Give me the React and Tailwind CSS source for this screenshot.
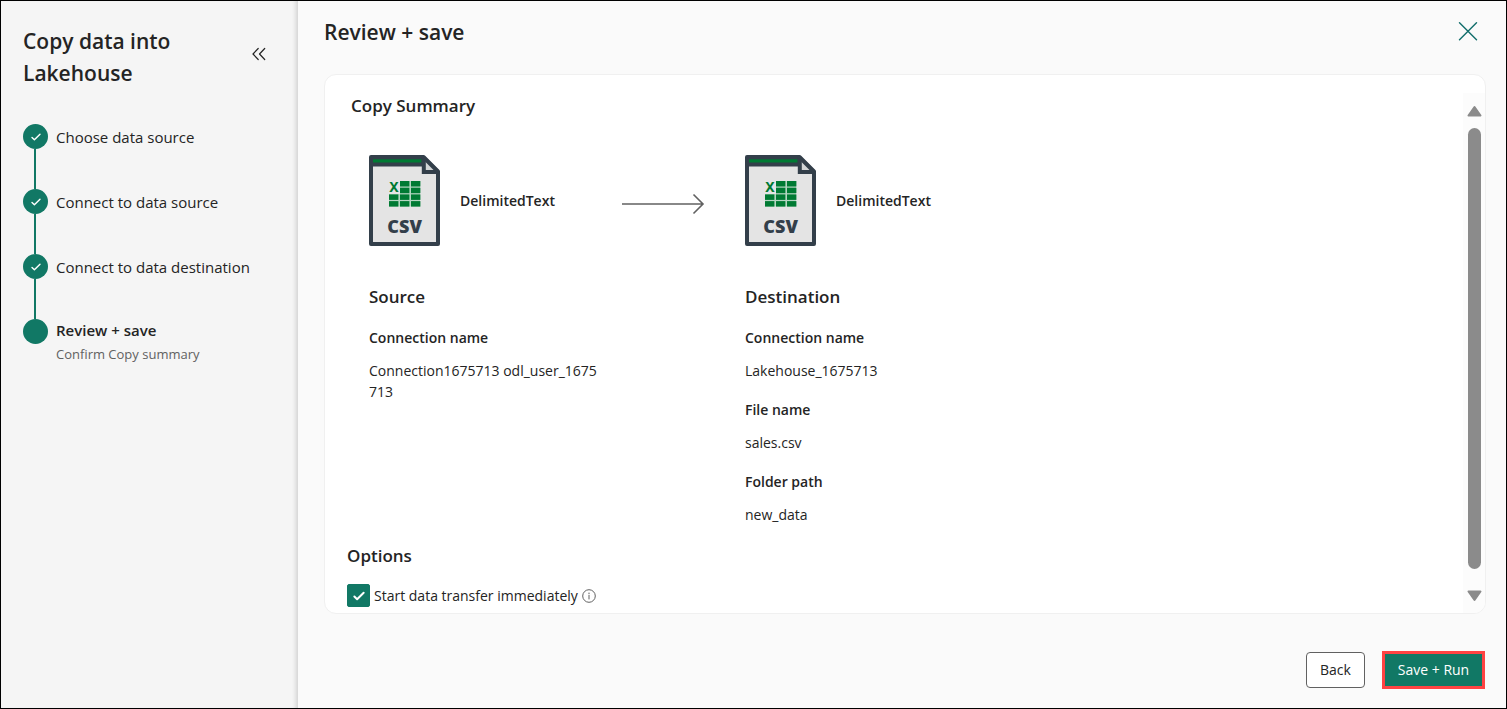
import React from "react";

const steps = [
  { label: "Choose data source", done: true },
  { label: "Connect to data source", done: true },
  { label: "Connect to data destination", done: true },
  { label: "Review + save", note: "Confirm Copy summary", done: false },
];

const source = [["Connection name", "Connection1675713 odl_user_1675713"]];

const destination = [
  ["Connection name", "Lakehouse_1675713"],
  ["File name", "sales.csv"],
  ["Folder path", "new_data"],
];

function Check({ className, width = 1.4 }) {
  return (
    <svg viewBox="0 0 12 12" className={className} fill="none" stroke="currentColor" strokeWidth={width} strokeLinecap="round" strokeLinejoin="round" aria-hidden="true">
      <path d="M2 6.4 4.4 8.8 10 3.2" />
    </svg>
  );
}

function CsvIcon() {
  const cells = [
    [31, 26], [42, 26],
    [31, 32.7], [42, 32.7],
    [20, 39.4], [31, 39.4], [42, 39.4],
    [20, 46.1], [31, 46.1], [42, 46.1],
  ];
  return (
    <svg viewBox="0 0 71 91" className="h-[91px] w-[71px] shrink-0" aria-hidden="true">
      <path d="M2 2H54.5L69 16.5V89H2Z" fill="#e4e4e4" stroke="#333f4a" strokeWidth="4" strokeLinejoin="round" />
      <path d="M2 2H54V11.5H2Z" fill="#333f4a" />
      <path d="M4 4.3H52.5V7.5H4Z" fill="#007a33" />
      <path d="M54.8 3V17H68.5" fill="#d3d5d6" stroke="#333f4a" strokeWidth="4" />
      <path d="M54.5 2.5 69 17" stroke="#333f4a" strokeWidth="3.6" strokeLinecap="round" />
      <path d="M20 39H31V26H51V51.5H20Z" fill="#b5d6c2" />
      {cells.map(([x, y]) => (
        <rect key={`${x}-${y}`} x={x} y={y} width="9.4" height="5.5" fill="#007a33" />
      ))}
      <text x="24.9" y="37.2" textAnchor="middle" fill="#007a33" className="font-['Noto_Sans',sans-serif] text-[14px] font-bold">X</text>
      <text x="35.6" y="77.6" textAnchor="middle" fill="#333f4a" className="font-['Open_Sans',sans-serif] text-[18px] font-extrabold">CSV</text>
    </svg>
  );
}

function Details({ title, items }) {
  return (
    <section className="w-[232px]">
      <h3 className="text-[17px] leading-6 font-semibold">{title}</h3>
      <dl className="mt-[18px] flex flex-col gap-[18px] text-sm leading-[21px]">
        {items.map(([name, value]) => (
          <div key={name} className="flex flex-col gap-3">
            <dt className="font-semibold">{name}</dt>
            <dd className="break-all">{value}</dd>
          </div>
        ))}
      </dl>
    </section>
  );
}

function Sidebar() {
  return (
    <aside className="z-10 w-[297px] shrink-0 bg-[#f5f5f5] pt-6 pl-[22px] shadow-[inset_-5px_0_4px_-3px_#d0d0d0]">
      <div className="flex items-start justify-between pr-[31px]">
        <h1 className="w-44 text-[21px] leading-8 font-semibold">Copy data into Lakehouse</h1>
        <button type="button" aria-label="Collapse panel" className="mt-[19px] flex h-5 w-4 items-center justify-center">
          <svg viewBox="0 0 14 14" className="h-3.5 w-3.5" fill="none" stroke="currentColor" strokeWidth="1.2" strokeLinecap="round" strokeLinejoin="round" aria-hidden="true">
            <path d="M6.2 1.5 1 7l5.2 5.5M12.7 1.5 7.5 7l5.2 5.5" />
          </svg>
        </button>
      </div>
      <ol className="mt-[35px]">
        {steps.map((step, i) => (
          <li key={step.label} className="flex min-h-[65px] gap-2">
            <div className="flex w-[25px] flex-col">
              <span className="flex h-[25px] w-[25px] shrink-0 items-center justify-center rounded-full bg-[#117865] text-white">
                {step.done && <Check className="h-3 w-3" />}
              </span>
              {i < steps.length - 1 && <span className="ml-[11px] w-0.5 flex-1 bg-[#117865]" />}
            </div>
            {step.note ? (
              <div>
                <p className="text-[15px] leading-[22px] font-semibold">{step.label}</p>
                <p className="text-[13px] leading-[26px] text-[#616161]">{step.note}</p>
              </div>
            ) : (
              <p className="text-[15px] leading-[26px]">{step.label}</p>
            )}
          </li>
        ))}
      </ol>
    </aside>
  );
}

function Scrollbar() {
  return (
    <div className="mt-[18px] flex w-[22px] shrink-0 flex-col items-center bg-[#fcfcfc] pt-3 pb-[11px] text-[#8b8b8b]" aria-hidden="true">
      <svg viewBox="0 0 15 12" className="h-3 w-[15px]" fill="currentColor" stroke="currentColor" strokeWidth="2" strokeLinejoin="round">
        <path d="M7.5 2 13.5 10.5H1.5Z" />
      </svg>
      <div className="mt-[11px] mb-[21px] w-[13px] flex-1 rounded-full bg-[#8b8b8b]" />
      <svg viewBox="0 0 15 12" className="h-3 w-[15px]" fill="currentColor" stroke="currentColor" strokeWidth="2" strokeLinejoin="round">
        <path d="M7.5 10 13.5 1.5H1.5Z" />
      </svg>
    </div>
  );
}

export default function App() {
  return (
    <div className="flex h-screen border border-black bg-[#fafafa] font-['Open_Sans','Noto_Sans',sans-serif] text-[#242424]">
      <Sidebar />
      <main className="flex min-w-0 flex-1 flex-col pr-5 pb-[19px] pl-[26px]">
        <header className="flex h-[61px] items-center justify-between pr-2">
          <h2 className="text-[21px] leading-8 font-semibold">Review + save</h2>
          <button type="button" aria-label="Close" className="flex h-5 w-5 items-center justify-center text-[#0f6c6a]">
            <svg viewBox="0 0 20 20" className="h-5 w-5" fill="none" stroke="currentColor" strokeWidth="1.4" strokeLinecap="round" aria-hidden="true">
              <path d="M1.5 .8 18.5 17.8M18.5 .8 1.5 17.8" />
            </svg>
          </button>
        </header>

        <div className="mt-3 flex min-h-0 flex-1 overflow-hidden rounded-xl border border-[#f0f0f0] bg-white">
          <div className="min-w-0 flex-1 overflow-hidden pt-[17px] pl-[22px]">
            <h3 className="pl-1 text-[17px] leading-7 font-semibold">Copy Summary</h3>
            <div className="mt-[35px] grid grid-cols-[376px_1fr] pl-[22px]">
              <div className="flex items-center gap-5">
                <CsvIcon />
                <span className="w-[142px] text-sm leading-6 font-semibold">DelimitedText</span>
                <svg viewBox="0 0 84 22" className="mt-1.5 h-[22px] w-[84px]" fill="none" stroke="#616161" strokeWidth="1.6" aria-hidden="true">
                  <path d="M0 11H81M71.5 1.5 81 11l-9.5 9.5" />
                </svg>
              </div>
              <div className="flex items-center gap-5">
                <CsvIcon />
                <span className="text-sm leading-6 font-semibold">DelimitedText</span>
              </div>
            </div>
            <div className="mt-[39px] grid grid-cols-[376px_1fr] pl-[22px]">
              <Details title="Source" items={source} />
              <Details title="Destination" items={destination} />
            </div>
            <h3 className="mt-[19px] text-[17px] leading-6 font-semibold">Options</h3>
            <div className="mt-4 flex items-center gap-1">
              <span className="grid h-[23px] w-[23px] place-items-center">
                <input id="start-now" type="checkbox" defaultChecked className="peer col-start-1 row-start-1 h-[23px] w-[23px] appearance-none rounded-xs border border-[#616161] bg-white checked:border-[#117865] checked:bg-[#117865]" />
                <Check className="pointer-events-none invisible col-start-1 row-start-1 h-3.5 w-3.5 text-white peer-checked:visible" width={1.7} />
              </span>
              <label htmlFor="start-now" className="text-sm leading-[23px]">Start data transfer immediately</label>
              <svg viewBox="0 0 14 14" className="h-3.5 w-3.5" fill="none" stroke="#616161" aria-hidden="true">
                <circle cx="7" cy="7" r="6.3" strokeWidth="1" />
                <path d="M7 6.2V10" strokeWidth="1" strokeLinecap="round" />
                <circle cx="7" cy="4.2" r=".7" fill="#616161" stroke="none" />
              </svg>
            </div>
          </div>
          <Scrollbar />
        </div>

        <footer className="mt-[37px] flex items-center justify-end gap-[17px] pr-px text-sm">
          <button type="button" className="h-9 w-[59px] rounded border border-[#616161] bg-white">Back</button>
          <button type="button" className="h-[38px] w-[103px] border-3 border-[#ff4343] bg-[#117865] text-white">Save + Run</button>
        </footer>
      </main>
    </div>
  );
}
